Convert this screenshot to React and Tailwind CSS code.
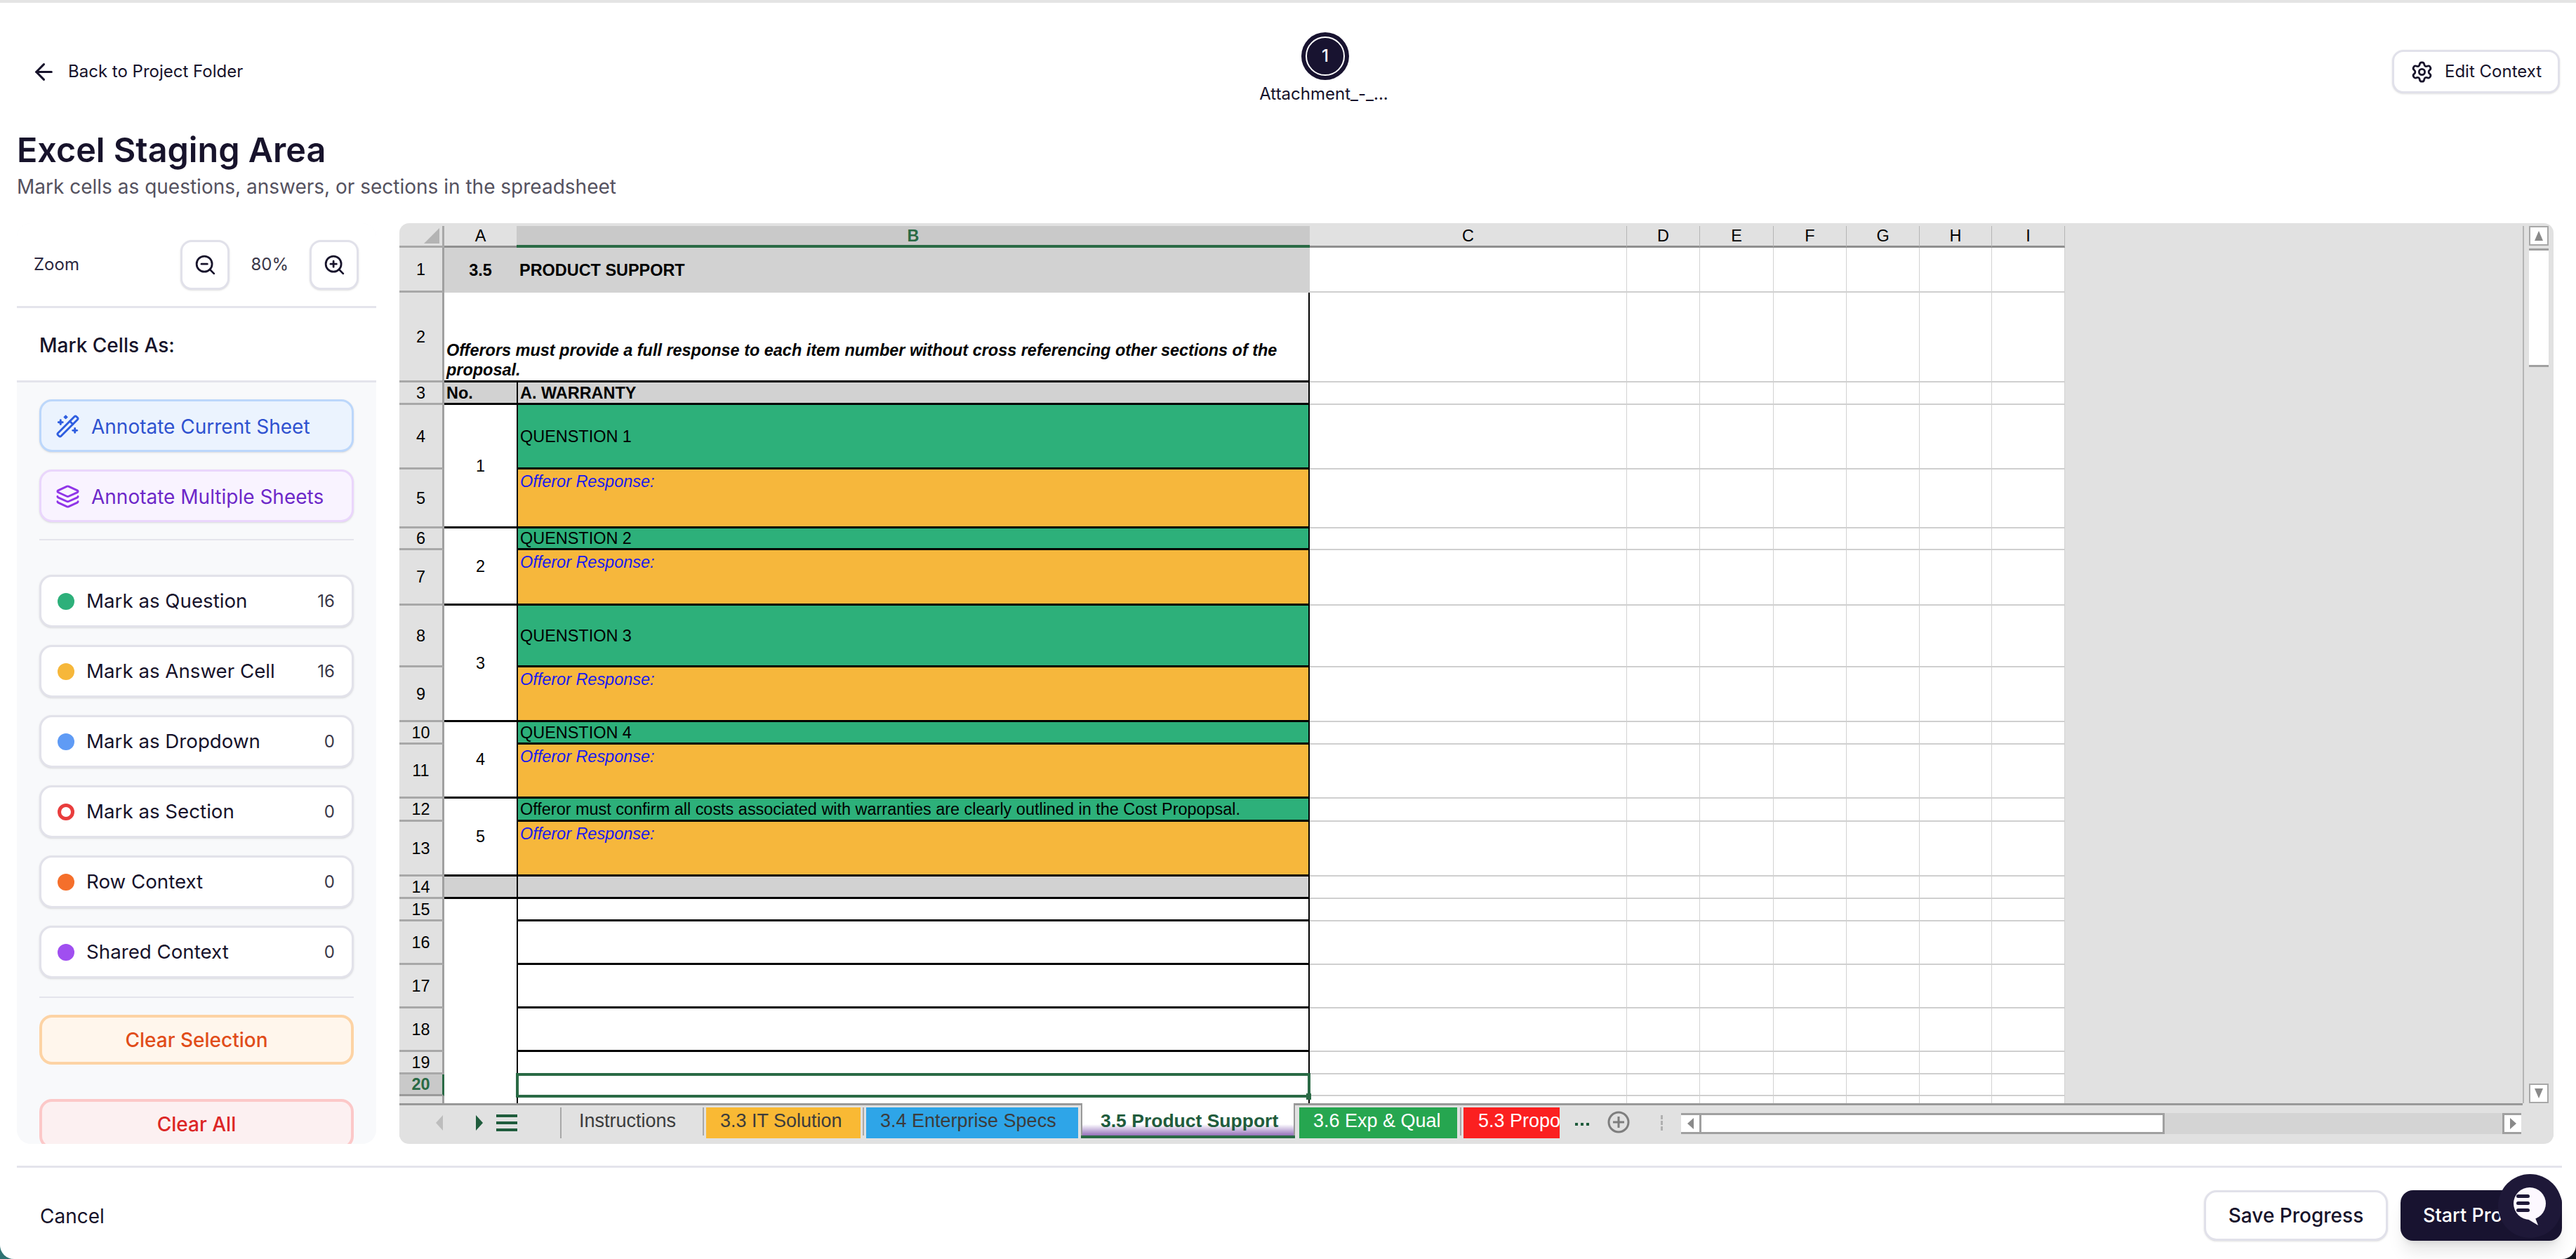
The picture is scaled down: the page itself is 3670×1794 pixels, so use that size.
import { ArrowLeft, Settings, ZoomIn, ZoomOut, WandSparkles, Layers } from "lucide-react";

const rowHeights = "grid-rows-[31px_64px_128px_32px_92px_84px_31px_79px_88px_78px_32px_77px_33px_78px_32px_32px_62px_62px_62px_32px_31px_10px]";
const rowLabels = [1, 2, 3, 4, 5, 6, 7, 8, 9, 10, 11, 12, 13, 14, 15, 16, 17, 18, 19, 20];
const emptyCols = ["C", "D", "E", "F", "G", "H", "I"];

const marks = [
  { label: "Mark as Question", count: 16, dot: "bg-[#2db07a]" },
  { label: "Mark as Answer Cell", count: 16, dot: "bg-[#f6b73a]" },
  { label: "Mark as Dropdown", count: 0, dot: "bg-[#5f9bf5]" },
  { label: "Mark as Section", count: 0, dot: "border-[5px] border-[#e93d3d] bg-white" },
  { label: "Row Context", count: 0, dot: "bg-[#f56f2b]" },
  { label: "Shared Context", count: 0, dot: "bg-[#a04ff0]" },
];

// question groups: first grid row, number in col A, question text
const groups = [
  { start: 5, n: "1", q: "QUENSTION 1" },
  { start: 7, n: "2", q: "QUENSTION 2" },
  { start: 9, n: "3", q: "QUENSTION 3" },
  { start: 11, n: "4", q: "QUENSTION 4" },
  { start: 13, n: "5", q: "Offeror must confirm all costs associated with warranties are clearly outlined in the Cost Propopsal." },
];

function Cell({ row, col, rowSpan = 1, colSpan = 1, className = "", children }) {
  return (
    <div
      style={{ gridRow: `${row} / span ${rowSpan}`, gridColumn: `${col} / span ${colSpan}` }}
      className={`min-w-0 ${className}`}
    >
      {children}
    </div>
  );
}

function Sheet() {
  return (
    <div className={`grid w-[2373px] shrink-0 bg-white font-['Liberation_Sans',Arial,sans-serif] text-[23.45px] leading-[28px] text-black grid-cols-[64px_103px_1130px_452px_104px_105px_104px_104px_103px_104px] ${rowHeights}`}>
      {/* column headers */}
      <Cell row={1} col={1} className="relative bg-[#e1e1e1] border-r-[3px] border-b-[3px] border-r-[#a8a8a8] border-b-[#a8a8a8]">
        <svg className="absolute right-[4px] bottom-[3px]" width="22" height="22" viewBox="0 0 22 22"><polygon points="22,0 22,22 0,22" fill="#b4b4b4" /></svg>
      </Cell>
      <Cell row={1} col={2} className="flex items-center justify-center bg-[#e1e1e1] border-b-[3px] border-[#8f8f8f]">A</Cell>
      <Cell row={1} col={3} className="flex items-center justify-center bg-[#c9c9c9] border-b-[4px] border-[#2a6a45] font-bold text-[#2a6a45]">B</Cell>
      {emptyCols.map((c, i) => (
        <Cell key={c} row={1} col={i + 4} className="flex items-center justify-center bg-[#e1e1e1] border-r border-b-[3px] border-r-[#b5b5b5] border-b-[#8f8f8f]">{c}</Cell>
      ))}

      {/* row headers */}
      {rowLabels.map((n) => (
        <Cell
          key={n}
          row={n + 1}
          col={1}
          className={n === 20
            ? "flex items-center justify-center bg-[#c9c9c9] border-r-[3px] border-b-[3px] border-r-[#2a6a45] border-b-[#9a9a9a] font-bold text-[#2a6a45]"
            : "flex items-center justify-center bg-[#e1e1e1] border-r-[3px] border-b-[3px] border-r-[#a0a0a0] border-b-[#a8a8a8]"}
        >
          {n}
        </Cell>
      ))}
      <Cell row={22} col={1} className="bg-[#e1e1e1] border-r-[3px] border-[#a0a0a0]" />

      {/* empty grid on the right */}
      {[...rowLabels, 21].map((n) =>
        emptyCols.map((c, i) => (
          <Cell key={c + n} row={n + 1} col={i + 4} className={`border-r border-r-[#d2d2d2] ${n < 21 ? "border-b-[2px] border-b-[#cfcfcf]" : ""}`} />
        ))
      )}

      {/* fixed rows */}
      <Cell row={2} col={2} className="flex items-center justify-center bg-[#d2d2d2] font-bold">3.5</Cell>
      <Cell row={2} col={3} className="flex items-center bg-[#d2d2d2] pl-[4px] font-bold">PRODUCT SUPPORT</Cell>
      <Cell row={3} col={2} colSpan={2} className="flex items-end border-r-[2px] border-b-[3px] border-black pb-[1px] pl-[3px] pr-[4px] font-bold italic">
        Offerors must provide a full response to each item number without cross referencing other sections of the proposal.
      </Cell>
      <Cell row={4} col={2} className="flex items-center bg-[#d2d2d2] border-b-[3px] border-black pl-[3px] font-bold">No.</Cell>
      <Cell row={4} col={3} className="flex items-center bg-[#d2d2d2] border-l-[2px] border-r-[2px] border-b-[3px] border-black pl-[3px] font-bold">A. WARRANTY</Cell>

      {groups.map((g) => (
        <Cell key={g.n} row={g.start} col={2} rowSpan={2} className="flex items-center justify-center bg-white border-b-[3px] border-black">{g.n}</Cell>
      ))}
      {groups.map((g) => (
        <Cell key={g.q} row={g.start} col={3} className="flex items-center overflow-hidden whitespace-nowrap bg-[#2db07a] border-l-[2px] border-r-[2px] border-b-[3px] border-black pl-[3px]">{g.q}</Cell>
      ))}
      {groups.map((g) => (
        <Cell key={g.n + "r"} row={g.start + 1} col={3} className="bg-[#f6b73c] border-l-[2px] border-r-[2px] border-b-[3px] border-black pl-[3px] pt-[3px] italic text-[#1a1aee]">Offeror Response:</Cell>
      ))}

      <Cell row={15} col={2} className="bg-[#d2d2d2] border-b-[3px] border-black" />
      <Cell row={15} col={3} className="bg-[#d2d2d2] border-l-[2px] border-r-[2px] border-b-[3px] border-black" />

      {/* blank rows below the table */}
      {[16, 17, 18, 19].map((r) => (
        <Cell key={r} row={r} col={3} className="bg-white border-l-[2px] border-r-[2px] border-b-[3px] border-black" />
      ))}
      <Cell row={20} col={3} className="bg-white border-l-[2px] border-r-[2px] border-black" />
      <Cell row={21} col={3} className="relative bg-white border-l-[2px] border-r-[2px] border-black">
        <div className="absolute -left-[3px] -right-[3px] -top-[2px] -bottom-[2px] border-[4px] border-[#2a6a45]" />
        <div className="absolute -right-[4px] -bottom-[5px] h-[9px] w-[7px] bg-[#2a6a45]" />
      </Cell>
      <Cell row={22} col={3} className="bg-white border-l-[2px] border-r-[2px] border-black" />
    </div>
  );
}

function VerticalScrollbar() {
  return (
    <div className="flex w-[44px] shrink-0 flex-col border-l-[2px] border-[#b5b5b5] pl-[7px] pr-[7px]">
      <div className="flex h-[28px] items-center justify-center border-[2px] border-[#a8a8a8] bg-white">
        <svg width="12" height="14" viewBox="0 0 12 14"><polygon points="6,0 12,14 0,14" fill="#8a8a8a" /></svg>
      </div>
      <div className="mt-[4px] h-[169px] border-y-[3px] border-[#a0a0a0] bg-white" />
      <div className="flex-1" />
      <div className="flex h-[28px] items-center justify-center border-[2px] border-[#a8a8a8] bg-white">
        <svg width="12" height="14" viewBox="0 0 12 14"><polygon points="0,0 12,0 6,14" fill="#8a8a8a" /></svg>
      </div>
    </div>
  );
}

function TabBar() {
  return (
    <div className="flex h-[57px] bg-[#e1e1e1] font-['Liberation_Sans',Arial,sans-serif] text-[27px] leading-[38px]">
      <div className="mr-[44px] flex flex-1 border-t-[3px] border-[#999999] pt-[3px]">
        <div className="flex h-[44px] w-[229px] shrink-0 items-center pl-[52px]">
          <svg width="10" height="22" viewBox="0 0 10 22"><polygon points="10,0 10,22 0,11" fill="#bdbdbd" /></svg>
          <svg className="ml-[47px]" width="10" height="22" viewBox="0 0 10 22"><polygon points="0,0 10,11 0,22" fill="#1f5c3c" /></svg>
          <div className="ml-[19px] flex h-[24px] w-[30px] flex-col justify-between">
            <span className="h-[4px] bg-[#1f5c3c]" />
            <span className="h-[4px] bg-[#1f5c3c]" />
            <span className="h-[4px] bg-[#1f5c3c]" />
          </div>
        </div>
        <div className="flex h-[44px] w-[203px] shrink-0 border-l-[2px] border-[#a8a8a8] pl-[25px] text-[#3c3c3c]">Instructions</div>
        <div className="h-[40px] w-[5px] shrink-0 border-l-[2px] border-[#a8a8a8]" />
        <div className="h-[44px] w-[220px] shrink-0 bg-[#f9b934] pl-[20px] text-[#3c3c3c]">3.3 IT Solution</div>
        <div className="ml-[3px] mr-[3px] h-[40px] w-[2px] shrink-0 bg-[#a8a8a8]" />
        <div className="h-[44px] w-[302px] shrink-0 bg-[#2ea5e8] pl-[20px] text-[#3c3c3c]">3.4 Enterprise Specs</div>
        <div className="relative -mt-[6px] ml-[4px] h-[50px] w-[305px] shrink-0 border-x-[2px] border-[#999999] bg-gradient-to-b from-white via-white via-60% to-[#7d4fa6] pl-[26px] pt-[6px] font-bold text-[#1f5c3c]">
          <span className="text-[26.5px]">3.5 Product Support</span>
          <div className="absolute -left-[2px] -right-[2px] bottom-0 h-[4px] bg-[#2a6a45]" />
        </div>
        <div className="ml-[6px] h-[44px] w-[225px] shrink-0 bg-[#26a650] pl-[20px] text-white">3.6 Exp &amp; Qual</div>
        <div className="ml-[4px] mr-[3px] h-[40px] w-[2px] shrink-0 bg-[#a8a8a8]" />
        <div className="h-[44px] w-[137px] shrink-0 overflow-hidden whitespace-nowrap bg-[#fb2020] pl-[21px] text-white">5.3 Proposal</div>
        <div className="ml-[22px] flex h-[44px] w-[20px] shrink-0 items-center justify-between pt-[4px]">
          <span className="h-[4px] w-[4px] bg-[#1f5c3c]" />
          <span className="h-[4px] w-[4px] bg-[#1f5c3c]" />
          <span className="h-[4px] w-[4px] bg-[#1f5c3c]" />
        </div>
        <svg className="ml-[26px] mt-[5px] shrink-0" width="32" height="32" viewBox="0 0 32 32">
          <circle cx="16" cy="16" r="14" fill="none" stroke="#7e7e7e" strokeWidth="3" />
          <path d="M16 8v16M8 16h16" stroke="#7e7e7e" strokeWidth="3" />
        </svg>
        <div className="ml-[44px] mt-[11px] h-[22px] w-0 shrink-0 border-l-[3px] border-dashed border-[#b0b0b0]" />
        <div className="ml-[26px] mt-[8px] flex h-[30px] flex-1 mr-[2px] bg-[#d4d4d4]">
          <div className="flex w-[29px] items-center justify-center border-y-[3px] border-r-[3px] border-[#a0a0a0] bg-white">
            <svg width="9" height="16" viewBox="0 0 9 16"><polygon points="9,0 9,16 0,8" fill="#8a8a8a" /></svg>
          </div>
          <div className="w-[660px] border-y-[3px] border-r-[3px] border-[#a0a0a0] bg-white" />
          <div className="flex-1" />
          <div className="flex w-[27px] items-center justify-center border-y-[3px] border-l-[3px] border-[#a0a0a0] bg-white">
            <svg width="9" height="16" viewBox="0 0 9 16"><polygon points="0,0 9,8 0,16" fill="#8a8a8a" /></svg>
          </div>
        </div>
      </div>
    </div>
  );
}

function Sidebar() {
  return (
    <div className="flex h-[1312px] w-[512px] shrink-0 flex-col overflow-hidden rounded-[20px] bg-[#f8f9fb]">
      <div className="flex h-[121px] shrink-0 items-center border-b-[3px] border-[#e4e4ec] bg-white pl-[24px] pr-[25px]">
        <span className="text-[24px] text-[#2b2840]">Zoom</span>
        <button className="ml-auto flex h-[71px] w-[70px] items-center justify-center rounded-[16px] border-[3px] border-[#e1e1ea] bg-white shadow-sm">
          <ZoomOut size={33} color="#17132b" />
        </button>
        <span className="mx-[30px] text-[24px] text-[#3a3748]">80%</span>
        <button className="flex h-[71px] w-[70px] items-center justify-center rounded-[16px] border-[3px] border-[#e1e1ea] bg-white shadow-sm">
          <ZoomIn size={33} color="#17132b" />
        </button>
      </div>
      <div className="flex h-[106px] shrink-0 items-center border-b-[3px] border-[#e4e4ec] bg-white pl-[32px] pt-[3px] text-[28px] font-medium text-[#17132b]">
        Mark Cells As:
      </div>
      <div className="flex flex-col px-[32px] pt-[24px]">
        <button className="flex h-[75px] items-center gap-[16px] rounded-[18px] border-[3px] border-[#bcd7fb] bg-[#ebf3fe] pl-[20px] pt-[2px] text-[28px] text-[#2f52d0] shadow-sm">
          <WandSparkles size={35} strokeWidth={2} color="#2f5ee0" />
          Annotate Current Sheet
        </button>
        <button className="mt-[25px] flex h-[75px] items-center gap-[16px] rounded-[18px] border-[3px] border-[#ead6fc] bg-[#f9f3ff] pl-[20px] pt-[2px] text-[28px] text-[#6d28c9] shadow-sm">
          <Layers size={35} strokeWidth={2} color="#9035e8" />
          Annotate Multiple Sheets
        </button>
        <div className="mb-[49px] mt-[24px] h-[2px] bg-[#e4e4ec]" />
        <div className="flex flex-col gap-[25px]">
          {marks.map((m) => (
            <button key={m.label} className="flex h-[75px] items-center rounded-[18px] border-[3px] border-[#e2e2ea] bg-white pl-[23px] pr-[24px] text-[27.7px] text-[#17132b] shadow-sm">
              <span className={`mr-[17px] h-[24px] w-[24px] shrink-0 rounded-full ${m.dot}`} />
              {m.label}
              <span className="ml-auto text-[24px] text-[#3a3748]">{m.count}</span>
            </button>
          ))}
        </div>
        <div className="mb-[24px] mt-[26px] h-[2px] bg-[#e4e4ec]" />
        <button className="h-[71px] shrink-0 rounded-[18px] border-[4px] border-[#fdd3a4] bg-[#fff6ec] text-[28px] font-medium text-[#e14d1a]">
          Clear Selection
        </button>
        <button className="mt-[49px] h-[71px] shrink-0 rounded-[18px] border-[4px] border-[#fcc8c8] bg-[#fcf0f1] text-[28px] font-medium text-[#dc2626]">
          Clear All
        </button>
      </div>
    </div>
  );
}

export default function App() {
  return (
    <div className="relative h-[1794px] w-[3670px] overflow-hidden bg-gradient-to-r from-[#2f7272] to-[#15151f] font-['Inter',sans-serif] text-[#17132b]">
      <div className="flex h-full flex-col rounded-b-[20px] border-t-[4px] border-[#e4e4e4] bg-white">
        {/* top bar */}
        <div className="grid h-[176px] shrink-0 grid-cols-[1788px_200px_1fr] items-center pr-[23px] pt-[20px]">
          <div className="flex items-center gap-[16px] pl-[44px] text-[24px] text-[#17132b]">
            <ArrowLeft size={37} strokeWidth={2} />
            Back to Project Folder
          </div>
          <div className="-mt-[20px] flex flex-col items-center self-start pt-[42px]">
            <div className="rounded-full bg-[#181330] p-[6px]">
              <div className="flex h-[56px] w-[56px] items-center justify-center rounded-full border-[2px] border-white text-[24px] font-medium text-white">1</div>
            </div>
            <span className="mt-[4px] whitespace-nowrap pr-[4px] text-[24px] leading-[32px] text-[#17132b]">Attachment_-_...</span>
          </div>
          <button className="ml-auto flex h-[62px] w-[239px] items-center gap-[16px] rounded-[16px] border-[3px] border-[#e1e1ea] bg-white pl-[23px] text-[24px] text-[#17132b] shadow-sm">
            <Settings size={33} strokeWidth={2} />
            Edit Context
          </button>
        </div>

        {/* title */}
        <div className="h-[138px] shrink-0 pl-[24px] pt-[6px]">
          <h1 className="text-[48.5px] font-semibold leading-[56px] text-[#17132b]">Excel Staging Area</h1>
          <p className="mt-[6px] text-[28px] leading-[36px] text-[#55525f]">Mark cells as questions, answers, or sections in the spreadsheet</p>
        </div>

        {/* body */}
        <div className="flex h-[1312px] shrink-0 gap-[33px] pl-[24px] pr-[32px]">
          <Sidebar />
          <div className="flex min-w-0 flex-1 flex-col overflow-hidden rounded-[14px] bg-[#e1e1e1] pt-[4px]">
            <div className="flex h-[1250px] shrink-0">
              <Sheet />
              <div className="flex-1" />
              <VerticalScrollbar />
            </div>
            <TabBar />
          </div>
        </div>

        {/* footer */}
        <div className="mx-[24px] mr-[20px] mt-[31px] flex flex-1 items-start border-t-[3px] border-[#e4e4ec] pt-[32px]">
          <button className="ml-[33px] mt-[16px] text-[28px] text-[#17132b]">Cancel</button>
          <button className="ml-auto h-[72px] w-[262px] rounded-[18px] border-[3px] border-[#e1e1ea] bg-white text-[28px] font-medium shadow-sm">Save Progress</button>
          <button className="ml-[18px] h-[72px] w-[230px] overflow-hidden whitespace-nowrap rounded-[18px] bg-[#181330] pl-[32px] text-left text-[27px] font-medium text-white shadow-xl">Start Process</button>
        </div>
      </div>

      {/* chat launcher */}
      <div className="absolute left-[3559px] top-[1673px] flex h-[91px] w-[91px] items-center justify-center rounded-full bg-[#1e1838]">
        <svg width="91" height="91" viewBox="0 0 91 91">
          <circle cx="45" cy="42" r="23" fill="#fdf8ff" />
          <path d="M52 60 L57 73 L42 64 Z" fill="#fdf8ff" />
          <rect x="26" y="29" width="19" height="5" rx="2.5" fill="#1e1838" />
          <rect x="26" y="39" width="19" height="5" rx="2.5" fill="#1e1838" />
          <rect x="26" y="49" width="19" height="5" rx="2.5" fill="#1e1838" />
        </svg>
      </div>
    </div>
  );
}
